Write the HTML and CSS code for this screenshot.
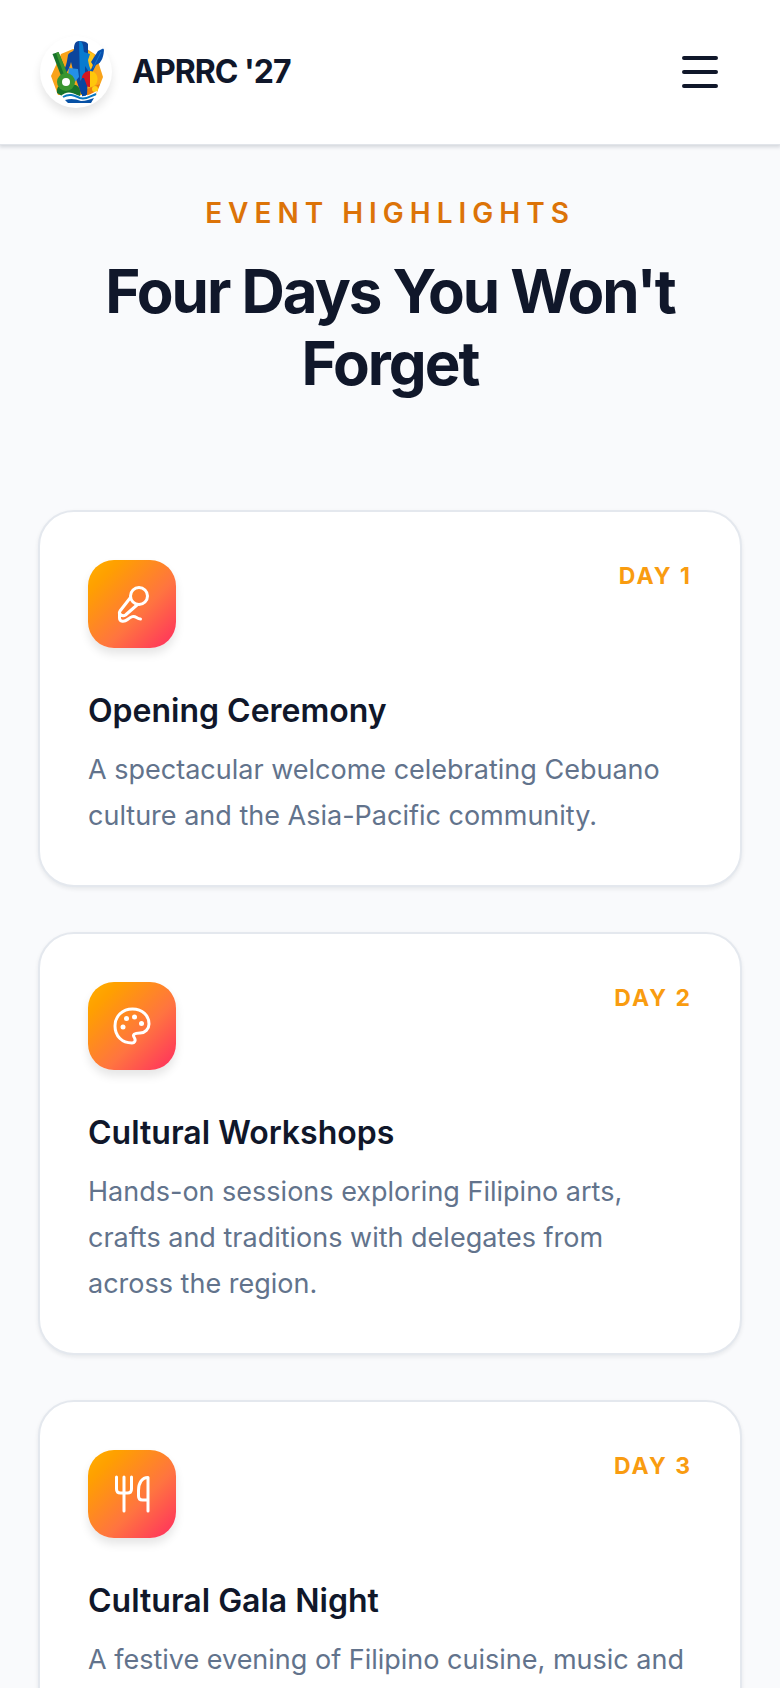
FILE: index.html
```html
<!DOCTYPE html>
<html lang="en">
<head>
<meta charset="utf-8">
<meta name="viewport" content="width=device-width, initial-scale=1">
<title>APRRC '27</title>
<link rel="stylesheet" href="styles.css">
</head>
<body>
<header class="topbar">
  <a class="brand" href="#">
    <svg class="brand-logo" viewBox="0 0 72 72" aria-hidden="true">
      <path fill="#f9a31a" d="M21 18l12-5h14l9 6 7 22-7 18H18l-7-19z"/>
      <path fill="#ffc61a" d="M43 14l11 4-3 18-8 4z"/>
      <path fill="#ee7d0b" d="M47 53l13-5-5 11-8 2z"/>
      <path fill="#0c459c" d="M39 5c-4 0-5 4-5 8 0 3-5 3-6 6-1 7-2 13-6 18l2 3c4-5 6-9 7-14l2 8 8 24 6 1 1-22V8c-1-2-4-3-9-3z"/>
      <path fill="#087bd0" d="M39 5c5 1 4 7 5 11l6 2-2 6c1 6 2 9 5 13l-2 2-6-9v9l-5 6z"/>
      <path fill="#2490e8" d="M29 32l9 1 1 8-6 7-5-8z"/>
      <path fill="#0751ae" d="M64 12l-6 3-7 11 2 3-4 9 2 1 5-10c6-2 8-9 8-17z"/>
      <path fill="none" stroke="#1976ca" d="M61 16l-8 16"/>
      <path fill="#17732a" d="M17 57c-1-6 3-9 8-9l11 1c4 2 5 7 4 12l-18-1z"/>
      <path fill="#17732a" d="M12.500 18l6-2 9 22-6 3z"/>
      <path fill="#39952f" d="M16 17l2.500-1 9 22-3 2z"/>
      <circle cx="26" cy="46" r="9" fill="#39952f"/>
      <path fill="#d41620" d="M50 35c-11 0-11 16 0 16z"/>
      <path fill="#ffc70b" d="M50 35c10 0 10 16 0 16z"/>
      <path fill="#0646a0" d="M42 42l2 0 3 8-1 11h-4z"/>
      <circle cx="26" cy="46" r="4" fill="#fff"/>
      <circle cx="55" cy="53" r="3" fill="#ffcf18"/>
      <path fill="#fff" d="M20 61c6-6 11-5 17-2 7 3 11 0 20-4l-3 13H24z"/>
      <path fill="none" stroke="#0877bf" stroke-width="2" d="M23 61c7-4 12-1 17 1 6 2 11-2 16-4"/>
      <path fill="#0751a5" d="M25 64c6-2 11-1 16 1 5 0 9-2 13-3l-3 5H28z"/>
    </svg>
    <span class="brand-name">APRRC '27</span>
  </a>
  <button class="menu-button" type="button" aria-label="Open menu">
    <svg viewBox="0 0 48 48" aria-hidden="true"><path d="M8 10h32M8 24h32M8 38h32"/></svg>
  </button>
</header>

<main class="highlights">
  <div class="intro">
    <p class="eyebrow">EVENT HIGHLIGHTS</p>
    <h1 class="headline">Four Days You Won't Forget</h1>
  </div>

  <article class="card">
    <div class="card-top">
      <span class="tile"><svg viewBox="0 0 88 88" aria-hidden="true"><circle cx="51" cy="36" r="8.500"/><path d="M42.500 37.500L32 51c-1 1.500-.500 3 1 4s3 1 4.500 0L49 45M31.500 53v5c0 4 5 4 8 1.500 4-3 6-4 9-2 1.500 1 2.500 1.500 4 1.500"/></svg></span>
      <span class="day">DAY 1</span>
    </div>
    <h2 class="card-title">Opening Ceremony</h2>
    <p class="card-text">A spectacular welcome celebrating Cebuano culture and the Asia-Pacific community.</p>
  </article>

  <article class="card">
    <div class="card-top">
      <span class="tile"><svg viewBox="0 0 88 88" aria-hidden="true"><path d="M44 61C34 61 27 54 27 44s7.500-17 17.500-17S61 33.500 61 42c0 5-4 9-9 9-5.500 0-8 1.500-5.500 5 1.500 2.500 0 5-2.500 5z"/><g class="dots"><circle cx="35" cy="45" r="2.500"/><circle cx="38.500" cy="36.500" r="2.500"/><circle cx="46.500" cy="35" r="2.500"/><circle cx="53.500" cy="41.500" r="2.500"/></g></svg></span>
      <span class="day">DAY 2</span>
    </div>
    <h2 class="card-title">Cultural Workshops</h2>
    <p class="card-text">Hands-on sessions exploring Filipino arts, crafts and traditions with delegates from across the region.</p>
  </article>

  <article class="card">
    <div class="card-top">
      <span class="tile"><svg viewBox="0 0 88 88" aria-hidden="true"><path d="M28.500 27v12c0 2.500 1.500 4 4 4h7c2.500 0 4-1.500 4-4V27M36 27v34M60 61V27.500c-6 0-9.500 5.500-9.500 13V46c0 2.500 1.500 4 4 4H60"/></svg></span>
      <span class="day">DAY 3</span>
    </div>
    <h2 class="card-title">Cultural Gala Night</h2>
    <p class="card-text">A festive evening of Filipino cuisine, music and</p>
  </article>
</main>
</body>
</html>
```
FILE: styles.css
```css
* { box-sizing: border-box; }
html { scrollbar-width: none; }
body {
  margin: 0;
  background: #f9fafc;
  color: #10172a;
  font-family: Inter, "Liberation Sans", sans-serif;
}
h1, h2, p { margin: 0; }

.topbar {
  display: flex;
  align-items: center;
  justify-content: space-between;
  padding: 36px 56px 36px 40px;
  border-bottom: 1px solid #e2e5ea;
  background: #fff;
  box-shadow: 0 1px 4px 1px rgba(15, 23, 42, 0.16);
}
.brand {
  display: flex;
  align-items: center;
  gap: 20px;
  color: inherit;
  text-decoration: none;
}
.brand-logo {
  width: 72px;
  height: 72px;
  border-radius: 50%;
  background: #fff;
  box-shadow: 0 6px 10px rgba(0, 0, 0, 0.1);
}
.brand-name {
  font-size: 32px;
  font-weight: 700;
  line-height: 40px;
  letter-spacing: -1px;
}
.menu-button {
  width: 48px;
  height: 48px;
  padding: 0;
  border: 0;
  background: none;
  color: inherit;
}
.menu-button svg {
  display: block;
  fill: none;
  stroke: currentColor;
  stroke-width: 4;
  stroke-linecap: round;
}

.highlights {
  display: flex;
  flex-direction: column;
  gap: 45px;
  padding: 48px 38px;
}
.intro {
  padding-bottom: 66px;
  text-align: center;
}
.eyebrow {
  margin-bottom: 22px;
  color: #dc7308;
  font-size: 28px;
  font-weight: 600;
  line-height: 40px;
  letter-spacing: 6px;
}
.headline {
  font-size: 60px;
  font-weight: 700;
  line-height: 72px;
  letter-spacing: -2px;
}

.card {
  padding: 48px 48px 46px;
  border: 2px solid #e4e8ee;
  border-radius: 36px;
  background: #fff;
  box-shadow: 0 2px 4px rgba(15, 23, 42, 0.08);
}
.card-top {
  display: flex;
  align-items: flex-start;
  justify-content: space-between;
  margin-bottom: 43px;
}
.tile {
  width: 88px;
  height: 88px;
  border-radius: 26px;
  background: linear-gradient(135deg, #ffb000 0%, #ffa000 18%, #ff7440 60%, #ff2c60 100%);
  box-shadow: 0 6px 10px rgba(0, 0, 0, 0.1);
}
.tile svg {
  display: block;
  fill: none;
  stroke: #fff;
  stroke-width: 3;
  stroke-linecap: round;
  stroke-linejoin: round;
}
.tile .dots {
  fill: #fff;
  stroke: none;
}
.day {
  color: #f99c10;
  font-size: 23px;
  font-weight: 700;
  line-height: 32px;
  letter-spacing: 2px;
}
.card-title {
  margin-bottom: 16px;
  font-size: 32px;
  font-weight: 600;
  line-height: 40px;
}
.card-text {
  color: #62738c;
  font-size: 27px;
  line-height: 46px;
}
```
